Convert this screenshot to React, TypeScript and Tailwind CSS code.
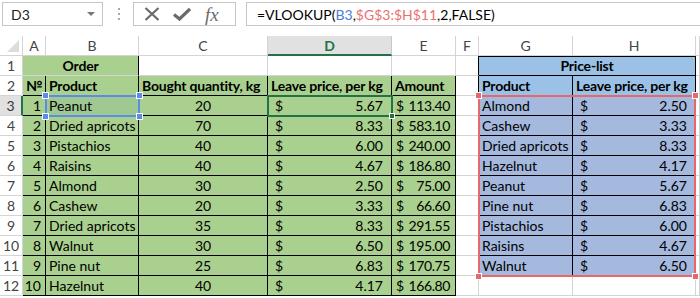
const FONT = { fontFamily: "Lato, 'Liberation Sans', sans-serif" };

type CellProps = {
  bg?: string;
  line?: string;
  align?: "left" | "right" | "center";
  bold?: boolean;
  span?: string;
  children?: React.ReactNode;
};

function Cell({ bg = "bg-white", line = "border-[#d4d4d4]", align = "left", bold, span = "", children }: CellProps) {
  const a = align === "right" ? "justify-end pr-[4px]" : align === "center" ? "justify-center" : "justify-start pl-[3px]";
  return (
    <div className={`flex h-[20px] items-center overflow-hidden whitespace-nowrap border-b border-r text-[14px] leading-none text-black ${bg} ${line} ${a} ${span} ${bold ? "font-bold tracking-[-0.2px]" : ""}`}>
      {children}
    </div>
  );
}

function Money({ bg, v, line = "border-black" }: { bg: string; v: string; line?: string }) {
  return (
    <div className={`flex h-[20px] items-center justify-between whitespace-nowrap border-b border-r pl-[7px] pr-[8px] text-[14px] leading-none text-black ${bg} ${line}`}>
      <span>$</span>
      <span>{v}</span>
    </div>
  );
}

function RowHead({ n, active }: { n: number; active?: boolean }) {
  return (
    <div
      className={`flex h-[20px] items-center justify-center border-b text-[14px] leading-none ${
        active ? "border-r-2 border-b-[#d4d4d4] border-r-[#217346] bg-[#e1e1e1] text-[#333]" : "border-r border-[#d4d4d4] bg-white text-[#444]"
      }`}
    >
      {n}
    </div>
  );
}

const orders = [
  ["1", "Peanut", "20", "5.67", "113.40"],
  ["2", "Dried apricots", "70", "8.33", "583.10"],
  ["3", "Pistachios", "40", "6.00", "240.00"],
  ["4", "Raisins", "40", "4.67", "186.80"],
  ["5", "Almond", "30", "2.50", "75.00"],
  ["6", "Cashew", "20", "3.33", "66.60"],
  ["7", "Dried apricots", "35", "8.33", "291.55"],
  ["8", "Walnut", "30", "6.50", "195.00"],
  ["9", "Pine nut", "25", "6.83", "170.75"],
  ["10", "Hazelnut", "40", "4.17", "166.80"],
];

const prices = [
  ["Almond", "2.50"],
  ["Cashew", "3.33"],
  ["Dried apricots", "8.33"],
  ["Hazelnut", "4.17"],
  ["Peanut", "5.67"],
  ["Pine nut", "6.83"],
  ["Pistachios", "6.00"],
  ["Raisins", "4.67"],
  ["Walnut", "6.50"],
];

const G = "bg-[#a9d08e]";
const B = "bg-[#9bc2e6]";
const BS = "bg-[#a5b8dd]";
const K = "border-black";

function Handle({ cls }: { cls: string }) {
  return <div className={`absolute h-[7px] w-[7px] border border-white ${cls}`} />;
}

export default function App() {
  return (
    <div className="relative h-[298px] w-[700px] overflow-hidden bg-white" style={FONT}>
      {/* formula bar */}
      <div className="flex h-[36px] items-start gap-0 pt-[2px]">
        <div className="ml-[2px] flex h-[24px] w-[101px] items-center justify-between border border-[#c6c6c6] pl-[8px] pr-[7px] text-[14px] text-[#222]">
          <span>D3</span>
          <span className="h-0 w-0 border-x-[4px] border-t-[4px] border-x-transparent border-t-[#777]" />
        </div>
        <div className="ml-[15px] mt-[6px] flex flex-col gap-[3px]">
          <span className="h-[2px] w-[2px] bg-[#aaa]" />
          <span className="h-[2px] w-[2px] bg-[#aaa]" />
          <span className="h-[2px] w-[2px] bg-[#aaa]" />
        </div>
        <div className="ml-[13px] flex h-[24px] w-[103px] items-center border border-[#c6c6c6] pl-[10px]">
          <svg width="16" height="14" viewBox="0 0 16 14" className="text-[#6a6a6a]">
            <path d="M1.5 1 L14.5 13 M14.5 1 L1.5 13" stroke="currentColor" strokeWidth="2.2" fill="none" />
          </svg>
          <svg width="18" height="14" viewBox="0 0 18 14" className="ml-[13px] text-[#6a6a6a]">
            <path d="M1 7.5 L6.5 12 L17 2" stroke="currentColor" strokeWidth="3.2" fill="none" />
          </svg>
          <span className="ml-[14px] text-[19px] italic leading-none text-[#6a6a6a]" style={{ fontFamily: "'Liberation Serif', serif" }}>
            fx
          </span>
        </div>
        <div className="ml-[10px] flex h-[24px] flex-1 items-center border border-r-0 border-[#c6c6c6] pl-[10px] text-[14px] text-black">
          <span>=VLOOKUP(</span>
          <span className="text-[#4a7bd0]">B3</span>
          <span>,</span>
          <span className="text-[#e8716f]">$G$3:$H$11</span>
          <span>,2,FALSE)</span>
        </div>
      </div>

      {/* sheet */}
      <div className="grid grid-cols-[23px_23px_93px_129px_124px_64px_23px_94px_123px_1fr]">
        {/* column headers */}
        <div className="relative h-[20px] border-b border-r border-[#d4d4d4]">
          <div className="absolute bottom-[3px] right-[3px] h-0 w-0 border-b-[12px] border-l-[12px] border-b-[#dcdcdc] border-l-transparent" />
        </div>
        {["A", "B", "C"].map((c) => (
          <div key={c} className="flex h-[20px] items-center justify-center border-b border-r border-[#d4d4d4] text-[14px] text-[#444]">
            {c}
          </div>
        ))}
        <div className="flex h-[20px] items-center justify-center border-b-2 border-r border-b-[#217346] border-r-[#c8c8c8] bg-[#e1e1e1] text-[14px] font-bold text-[#217346]">
          D
        </div>
        {["E", "F", "G", "H", ""].map((c, i) => (
          <div key={i} className="flex h-[20px] items-center justify-center border-b border-r border-[#d4d4d4] text-[14px] text-[#444]">
            {c}
          </div>
        ))}

        {/* row 1 */}
        <RowHead n={1} />
        <Cell bg={G} line="border-[#d4d4d4] border-r-black" span="col-span-2" align="center" bold>
          Order
        </Cell>
        <Cell />
        <Cell />
        <Cell />
        <Cell line="border-r-black border-b-[#d4d4d4]" />
        <Cell bg={B} line={K} span="col-span-2 border-t border-t-black" align="center" bold>
          Price-list
        </Cell>
        <Cell />

        {/* row 2 */}
        <RowHead n={2} />
        <Cell bg={G} line={K} bold>
          №
        </Cell>
        <Cell bg={G} line={K} bold>
          Product
        </Cell>
        <Cell bg={G} line={K} bold>
          Bought quantity, kg
        </Cell>
        <Cell bg={G} line={K} bold>
          Leave price, per kg
        </Cell>
        <Cell bg={G} line={K} bold>
          Amount
        </Cell>
        <Cell line="border-r-black border-b-[#d4d4d4]" />
        <Cell bg={B} line={K} bold>
          Product
        </Cell>
        <Cell bg={B} line={K} bold>
          Leave price, per kg
        </Cell>
        <Cell />

        {orders.map((o, i) => {
          const p = prices[i];
          return [
            <RowHead key={`h${i}`} n={i + 3} active={i === 0} />,
            <Cell key={`a${i}`} bg={G} line={K} align="right">
              {o[0]}
            </Cell>,
            <Cell key={`b${i}`} bg={i === 0 ? "bg-[#9fc893]" : G} line={K}>
              {o[1]}
            </Cell>,
            <Cell key={`c${i}`} bg={G} line={K} align="center">
              {o[2]}
            </Cell>,
            <Money key={`d${i}`} bg={G} v={o[3]} />,
            <div key={`e${i}`} className={`flex h-[20px] items-center whitespace-nowrap border-b border-r border-black pl-[4px] pr-[5px] text-[14px] leading-none text-black ${G}`}>
              <span>$</span>
              <span className="flex-1 text-right tracking-[-0.4px]">{o[4]}</span>
            </div>,
            <Cell key={`f${i}`} line={p ? "border-[#d4d4d4] border-r-black" : "border-[#d4d4d4]"} />,
            p ? (
              <Cell key={`g${i}`} bg={BS} line={K}>
                {p[0]}
              </Cell>
            ) : (
              <Cell key={`g${i}`} />
            ),
            p ? <Money key={`hh${i}`} bg={BS} v={p[1]} /> : <Cell key={`hh${i}`} />,
            <Cell key={`i${i}`} />,
          ];
        })}
      </div>

      {/* B3 selection (formula reference) */}
      <div className="pointer-events-none absolute left-[45px] top-[95px] h-[22px] w-[95px] border-2 border-[#5b8de6]">
        <Handle cls="-left-[5px] -top-[5px] bg-[#5b8de6]" />
        <Handle cls="-right-[5px] -top-[5px] bg-[#5b8de6]" />
        <Handle cls="-left-[5px] -bottom-[5px] bg-[#5b8de6]" />
        <Handle cls="-right-[5px] -bottom-[5px] bg-[#5b8de6]" />
      </div>

      {/* D3 active cell */}
      <div className="pointer-events-none absolute left-[267px] top-[95px] h-[22px] w-[126px] border-2 border-[#217346]">
        <div className="absolute -bottom-[4px] -right-[4px] h-[6px] w-[6px] border border-white bg-[#217346]" />
      </div>

      {/* G3:H11 reference */}
      <div className="pointer-events-none absolute left-[478px] top-[95px] h-[182px] w-[218px] border-2 border-[#e6686a]">
        <Handle cls="-left-[5px] -top-[5px] bg-[#e6686a]" />
        <Handle cls="-right-[5px] -top-[5px] bg-[#e6686a]" />
        <Handle cls="-left-[5px] -bottom-[5px] bg-[#e6686a]" />
        <Handle cls="-right-[5px] -bottom-[5px] bg-[#e6686a]" />
      </div>
    </div>
  );
}
